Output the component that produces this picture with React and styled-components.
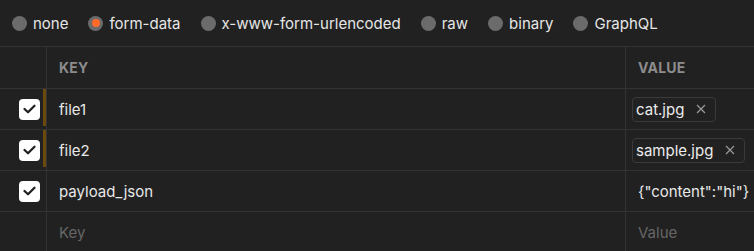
import React from 'react';
import styled, { createGlobalStyle } from 'styled-components';

const GlobalStyle = createGlobalStyle`
  html, body {
    margin: 0;
    padding: 0;
    background: #212121;
  }
  body {
    font-family: Inter, "Noto Sans", sans-serif;
    color: #e8e8e8;
  }
`;

const Page = styled.div`
  width: 754px;
  height: 251px;
  overflow: hidden;
  background: #212121;
`;

const BodyTypes = styled.div`
  display: flex;
  align-items: center;
  height: 46px;
  padding-left: 12px;
  gap: 20px;
`;

const RadioLabel = styled.label`
  display: flex;
  align-items: center;
  gap: 6px;
  font-size: 15px;
  color: #e6e6e6;
`;

const RadioDot = styled.span`
  width: 15px;
  height: 15px;
  border-radius: 50%;
  background: #6b6b6b;
  display: flex;
  align-items: center;
  justify-content: center;
  &::after {
    content: '';
    width: 8px;
    height: 8px;
    border-radius: 50%;
    background: ${(p) => (p.checked ? '#ff6a2b' : 'transparent')};
  }
`;

const Table = styled.div`
  border-top: 1px solid #333333;
`;

const Row = styled.div`
  display: grid;
  grid-template-columns: 47px 1fr 128px;
  height: ${(p) => (p.header ? 41 : 40)}px;
  border-bottom: ${(p) => (p.last ? 'none' : '1px solid #333333')};
`;

const CheckCell = styled.div`
  position: relative;
  display: flex;
  align-items: center;
  justify-content: flex-end;
  padding-right: 6px;
  border-right: 1px solid #333333;
  &::after {
    content: '';
    display: ${(p) => (p.modified ? 'block' : 'none')};
    position: absolute;
    right: 0;
    top: 0;
    bottom: 3px;
    width: 3px;
    background: #6b4a0c;
  }
`;

const Cell = styled.div`
  display: flex;
  align-items: center;
  padding-left: ${(p) => (p.tight ? 6 : 12)}px;
  font-size: 15px;
  color: ${(p) => (p.placeholder ? '#666666' : '#e8e8e8')};
  border-right: ${(p) => (p.divider ? '1px solid #333333' : 'none')};
  white-space: nowrap;
  overflow: hidden;
`;

const HeaderCell = styled(Cell)`
  font-size: 14px;
  font-weight: 700;
  color: #8c8c8c;
  letter-spacing: 0.2px;
`;

const Checkbox = styled.span`
  width: 21px;
  height: 21px;
  border-radius: 4px;
  background: #ffffff;
  display: flex;
  align-items: center;
  justify-content: center;
`;

const FileChip = styled.span`
  display: inline-flex;
  align-items: center;
  gap: 12px;
  height: 23px;
  padding: 0 9px 0 3px;
  border: 1px solid #3a3a3a;
  border-radius: 4px;
  font-size: 15px;
  color: #ececec;
`;

const CloseIcon = () => (
  <svg width="10" height="10" viewBox="0 0 10 10">
    <path d="M1 1 L9 9 M9 1 L1 9" stroke="#9a9a9a" strokeWidth="1.2" fill="none" />
  </svg>
);

const CheckIcon = () => (
  <svg width="13" height="10" viewBox="0 0 13 10">
    <path d="M1.5 5 L5 8.3 L11.5 1.7" stroke="#1f1f1f" strokeWidth="2.2" fill="none" strokeLinecap="round" strokeLinejoin="round" />
  </svg>
);

const types = ['none', 'form-data', 'x-www-form-urlencoded', 'raw', 'binary', 'GraphQL'];

const rows = [
  { key: 'file1', file: 'cat.jpg', modified: true },
  { key: 'file2', file: 'sample.jpg', modified: true },
  { key: 'payload_json', value: '{"content":"hi"}' },
];

export default function App() {
  return (
    <Page>
      <GlobalStyle />
      <BodyTypes>
        {types.map((t) => (
          <RadioLabel key={t}>
            <RadioDot checked={t === 'form-data'} />
            {t}
          </RadioLabel>
        ))}
      </BodyTypes>
      <Table>
        <Row header>
          <CheckCell />
          <HeaderCell divider>KEY</HeaderCell>
          <HeaderCell>VALUE</HeaderCell>
        </Row>
        {rows.map((r) => (
          <Row key={r.key}>
            <CheckCell modified={r.modified}>
              <Checkbox>
                <CheckIcon />
              </Checkbox>
            </CheckCell>
            <Cell divider>{r.key}</Cell>
            {r.file ? (
              <Cell tight>
                <FileChip>
                  {r.file}
                  <CloseIcon />
                </FileChip>
              </Cell>
            ) : (
              <Cell>{r.value}</Cell>
            )}
          </Row>
        ))}
        <Row last>
          <CheckCell />
          <Cell divider placeholder>Key</Cell>
          <Cell placeholder>Value</Cell>
        </Row>
      </Table>
    </Page>
  );
}
